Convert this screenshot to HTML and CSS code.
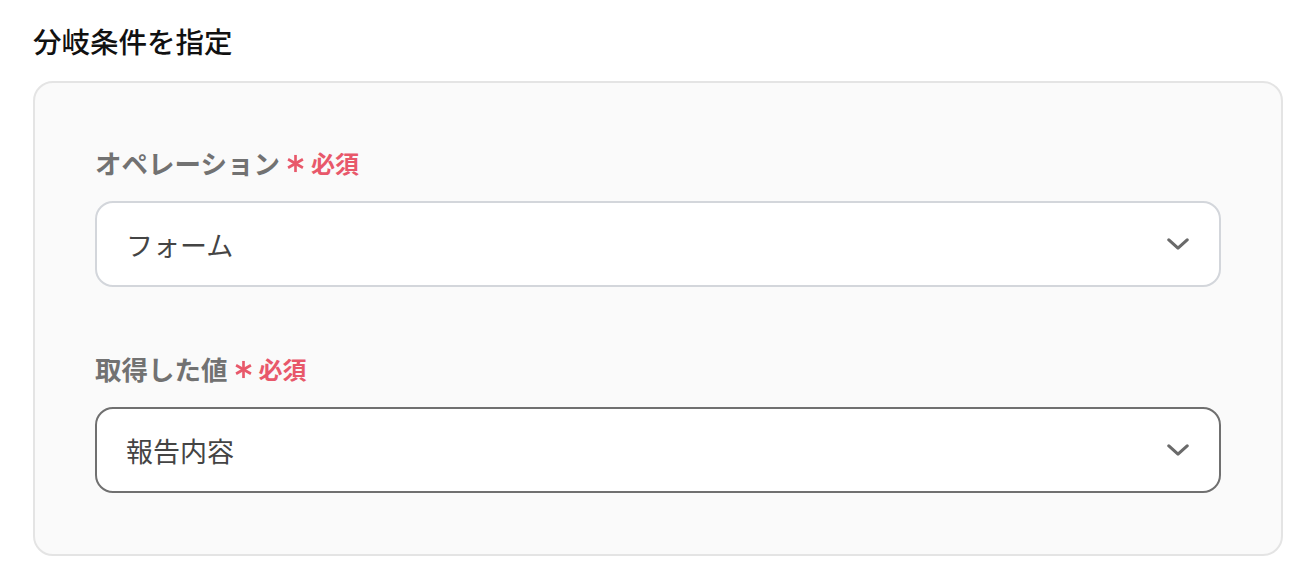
FILE: index.html
```html
<!DOCTYPE html>
<html lang="ja">
<head>
<meta charset="utf-8">
<link rel="stylesheet" href="styles.css">
</head>
<body>
<div class="page">
  <h2 class="title">分岐条件を指定</h2>
  <div class="panel">
    <div class="field">
      <div class="label">オペレーション<span class="req"><svg class="ast" viewBox="0 0 20 20" width="19" height="19"><g stroke="currentColor" stroke-width="2.8" stroke-linecap="butt"><line x1="10" y1="1" x2="10" y2="19"/><line x1="2.2" y1="5.5" x2="17.8" y2="14.5"/><line x1="2.2" y1="14.5" x2="17.8" y2="5.5"/></g></svg>必須</span></div>
      <div class="select">
        <span class="value">フォーム</span>
        <svg class="chev" viewBox="0 0 24 14" width="22" height="13"><polyline points="2,2 12,11 22,2" fill="none" stroke="currentColor" stroke-width="3.4" stroke-linecap="round" stroke-linejoin="round"/></svg>
      </div>
    </div>
    <div class="field">
      <div class="label">取得した値<span class="req"><svg class="ast" viewBox="0 0 20 20" width="19" height="19"><g stroke="currentColor" stroke-width="2.8" stroke-linecap="butt"><line x1="10" y1="1" x2="10" y2="19"/><line x1="2.2" y1="5.5" x2="17.8" y2="14.5"/><line x1="2.2" y1="14.5" x2="17.8" y2="5.5"/></g></svg>必須</span></div>
      <div class="select select-active">
        <span class="value">報告内容</span>
        <svg class="chev" viewBox="0 0 24 14" width="22" height="13"><polyline points="2,2 12,11 22,2" fill="none" stroke="currentColor" stroke-width="3.4" stroke-linecap="round" stroke-linejoin="round"/></svg>
      </div>
    </div>
  </div>
</div>
</body>
</html>
```
FILE: styles.css
```css
* { box-sizing: border-box; }
html, body { margin: 0; padding: 0; background: #ffffff; }
body {
  font-family: "Noto Sans CJK JP", "Noto Sans", sans-serif;
  color: #111;
}
.page {
  padding: 21px 27px 0 33px;
}
.title {
  margin: 0 0 20px 0;
  font-size: 28.5px;
  line-height: 40px;
  font-weight: 500;
  color: #111;
}
.panel {
  width: 1250px;
  background: #fafafa;
  border: 2px solid #e4e4e4;
  border-radius: 20px;
  padding: 62px 60px 61px 60px;
  display: flex;
  flex-direction: column;
  gap: 64px;
}
.field {
  display: flex;
  flex-direction: column;
  gap: 20px;
}
.label {
  display: flex;
  align-items: center;
  font-size: 26.5px;
  line-height: 36px;
  height: 36px;
  font-weight: 700;
  color: #727272;
}
.req {
  display: flex;
  align-items: center;
  color: #e8586a;
  font-size: 24px;
  font-weight: 700;
  margin-left: 6px;
}
.ast {
  margin-right: 6px;
}
.select {
  height: 86px;
  background: #fff;
  border: 2px solid #d3d6db;
  border-radius: 18px;
  display: flex;
  align-items: center;
  justify-content: space-between;
  padding: 0 30px 0 29px;
}
.select-active {
  border-color: #707070;
}
.value {
  font-size: 27px;
  color: #444;
  font-weight: 400;
}
.chev {
  color: #6a6a6a;
}
```
